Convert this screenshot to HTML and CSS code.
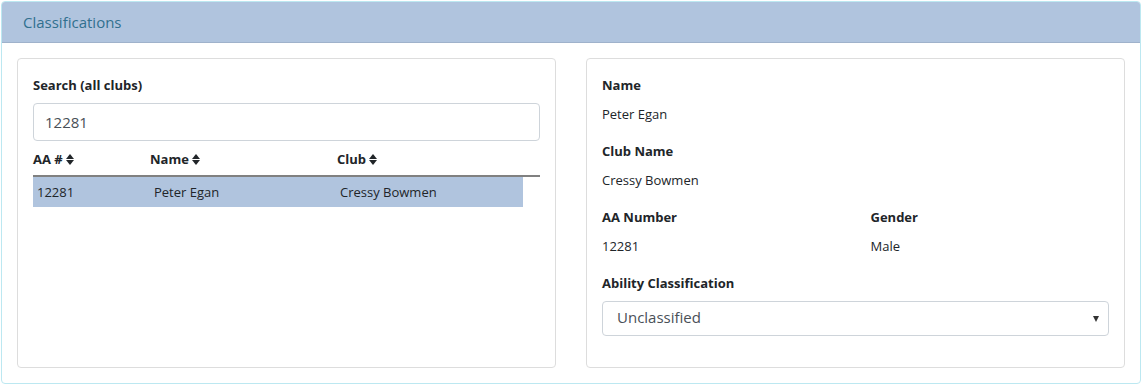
FILE: index.html
```html
<!doctype html>
<html>
<head>
	<title>Classifications</title>
	<link rel="stylesheet" href="styles.css">
</head>
<body>
	<div class="panel">
		<div class="panel-heading">Classifications</div>
		<div class="panel-body">
			<div class="card">
				<label class="field-label">Search (all clubs)</label>
				<input class="form-control" type="text" value="12281">
				<div class="grid-head">
					<div>AA # <span class="sort"></span></div>
					<div>Name <span class="sort"></span></div>
					<div>Club <span class="sort"></span></div>
				</div>
				<div class="grid-row selected">
					<div>12281</div>
					<div>Peter Egan</div>
					<div>Cressy Bowmen</div>
				</div>
			</div>
			<div class="card">
				<div class="field-label">Name</div>
				<div class="field-value">Peter Egan</div>
				<div class="field-label">Club Name</div>
				<div class="field-value">Cressy Bowmen</div>
				<div class="two-col">
					<div>
						<div class="field-label">AA Number</div>
						<div class="field-value">12281</div>
					</div>
					<div>
						<div class="field-label">Gender</div>
						<div class="field-value">Male</div>
					</div>
				</div>
				<div class="field-label">Ability Classification</div>
				<div class="select">
					<span>Unclassified</span>
					<span class="caret"></span>
				</div>
			</div>
		</div>
	</div>
</body>
</html>
```

FILE: styles.css
```css
html, body {
	margin: 0;
	padding: 0;
	background: #fff;
	font-family: "Open Sans", "Noto Sans", sans-serif;
	color: #212529;
}

.panel {
	margin: 1px 1px 1px 1px;
	border: 1px solid #bce8f1;
	border-radius: 4px;
	height: 383px;
	box-sizing: border-box;
}

.panel-heading {
	background-color: #b0c4de;
	border-bottom: 1px solid #9fb2cb;
	color: #31708f;
	font-size: 15px;
	height: 40px;
	line-height: 40px;
	padding-left: 21px;
	border-radius: 3px 3px 0 0;
}

.panel-body {
	display: grid;
	grid-template-columns: 539px 539px;
	column-gap: 30px;
	padding: 15px;
}

.card {
	border: 1px solid #dddddd;
	border-radius: 4px;
	padding: 16px 15px 16px 15px;
	height: 310px;
	box-sizing: border-box;
}

.field-label {
	display: block;
	font-weight: bold;
	font-size: 13px;
	line-height: 20px;
	margin-bottom: 9px;
}

.field-value {
	font-size: 13px;
	line-height: 20px;
	margin-bottom: 17px;
}

.two-col {
	display: grid;
	grid-template-columns: 1fr 1fr;
	column-gap: 30px;
}

.form-control {
	display: block;
	width: 100%;
	box-sizing: border-box;
	height: 38px;
	margin: -1px 0 0 0;
	padding: 0 11px 1px 11px;
	border: 1px solid #ced4da;
	border-radius: 4px;
	font-family: inherit;
	font-size: 15px;
	color: #495057;
}

.grid-head,
.grid-row {
	display: grid;
	grid-template-columns: 117px 187px 1fr;
	font-size: 13px;
}

.grid-head {
	font-weight: bold;
	height: 34px;
	line-height: 37px;
	border-bottom: 2px solid #808080;
}

.grid-row {
	height: 30px;
	line-height: 30px;
	margin-right: 17px;
}

.grid-row div {
	padding-left: 4px;
}

.grid-row div:last-child {
	padding-left: 3px;
}

.grid-row.selected {
	background-color: #b0c4de;
}

.sort {
	display: inline-block;
	width: 9px;
	height: 11px;
	vertical-align: -1px;
	position: relative;
}

.sort:before,
.sort:after {
	content: "";
	position: absolute;
	left: 0;
	border-left: 4.5px solid transparent;
	border-right: 4.5px solid transparent;
}

.sort:before {
	top: 0;
	border-bottom: 5px solid #212529;
}

.sort:after {
	top: 6px;
	border-top: 5px solid #212529;
}

.select {
	display: flex;
	justify-content: space-between;
	align-items: center;
	height: 35px;
	box-sizing: border-box;
	margin-top: -1px;
	padding: 0 9px 3px 14px;
	border: 1px solid #ced4da;
	border-radius: 4px;
	font-size: 15px;
	color: #495057;
}

.caret {
	margin-top: 3px;
	border-left: 3.5px solid transparent;
	border-right: 3.5px solid transparent;
	border-top: 6px solid #333;
}
```
